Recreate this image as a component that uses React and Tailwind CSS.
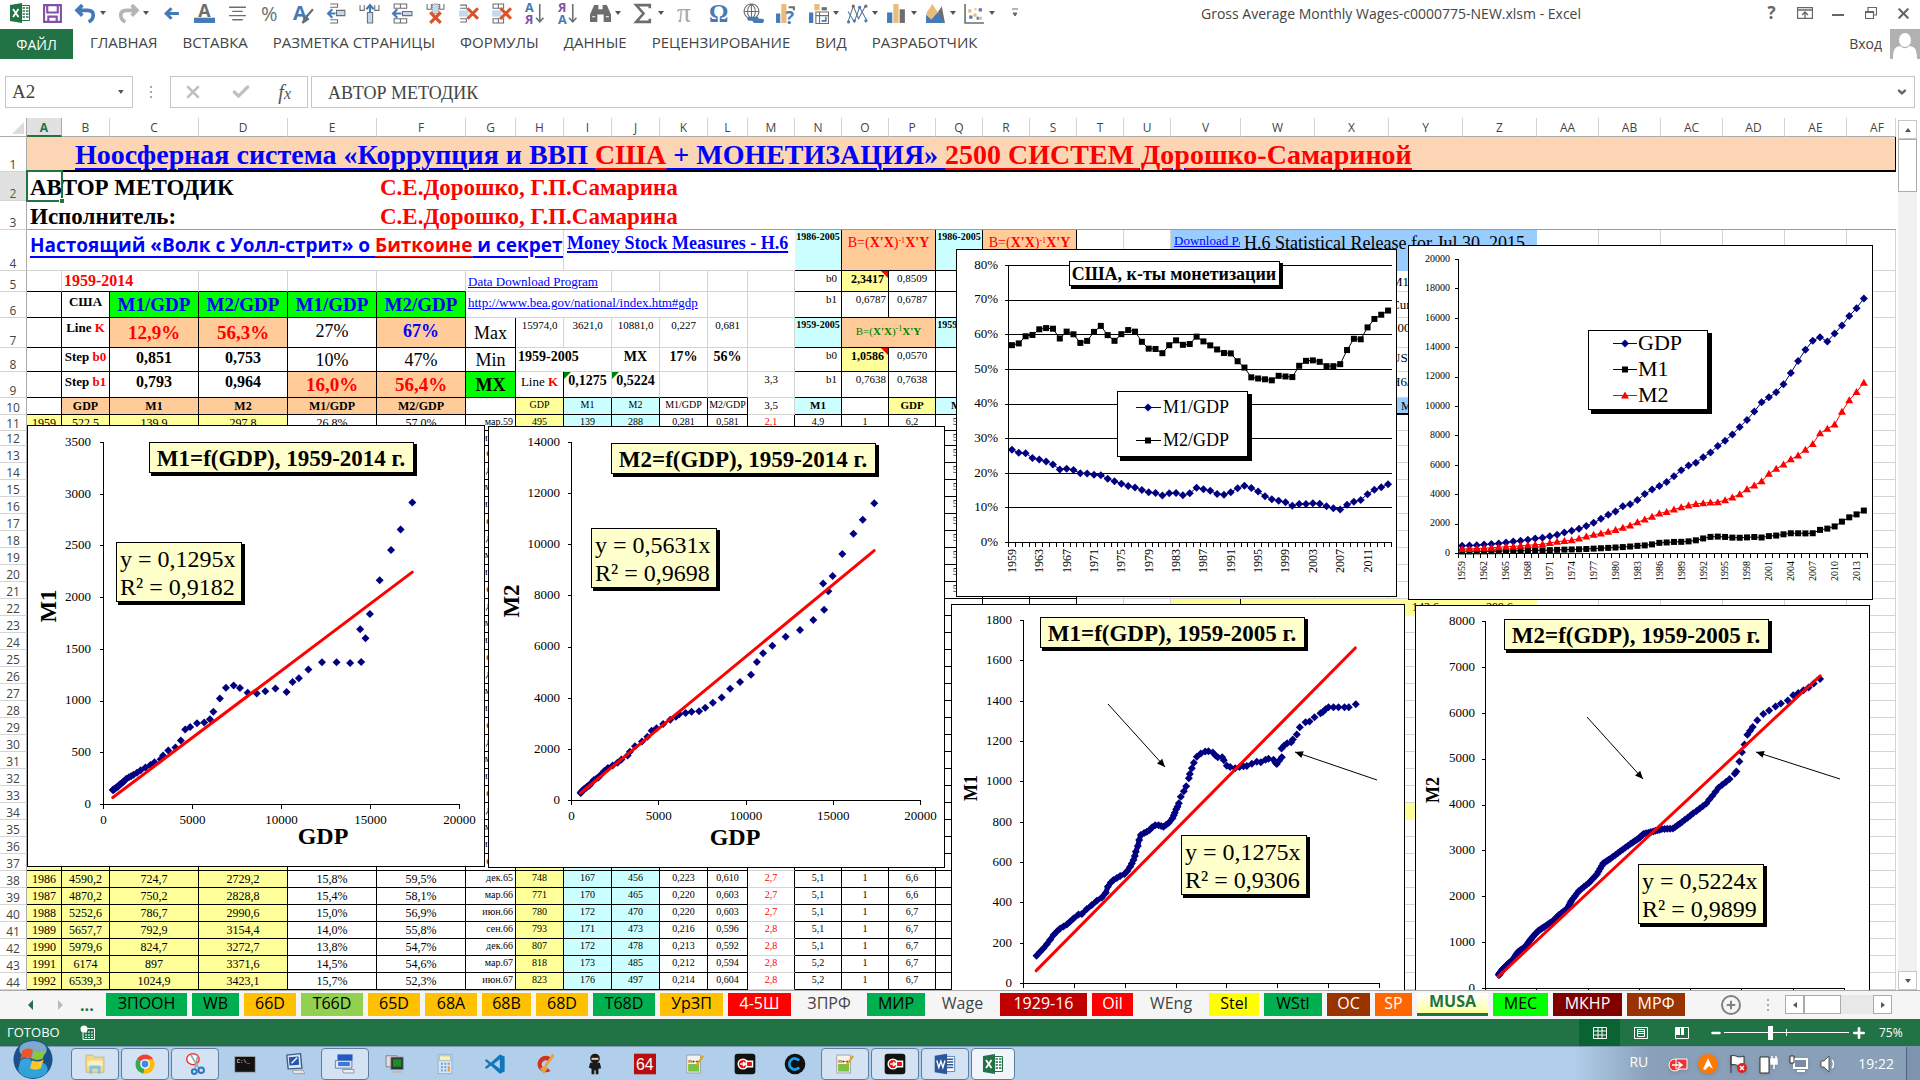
import React from 'react';
import { X, Check, Plus, Minus, ChevronDown } from 'lucide-react';

const GDP = [522.5, 543.3, 563.3, 605.1, 638.6, 685.8, 743.7, 815, 861.7, 942.5, 1019.9, 1075.9, 1167.8, 1282.4, 1428.5, 1548.8, 1688.9, 1877.6, 2086, 2356.6, 2632.1, 2862.5, 3211, 3345, 3638.1, 4040.7, 4346.7, 4590.2, 4870.2, 5252.6, 5657.7, 5979.6, 6174, 6539.3, 6878.7, 7308.8, 7664.1, 8100.2, 8608.5, 9089.2, 9660.6, 10284.8, 10621.8, 10977.5, 11510.7, 12274.9, 13093.7, 13855.9, 14477.6, 14718.6, 14418.7, 14964.4, 15517.9, 16155.3, 16691.5, 17348];
const M1 = [139.9, 140.7, 145.2, 147.8, 153.3, 160.3, 167.8, 172, 183.3, 197.4, 203.9, 214.4, 228.3, 249.2, 262.9, 274.2, 287.1, 306.2, 330.9, 357.3, 381.8, 408.5, 436.7, 474.8, 521.4, 551.6, 619.8, 724.7, 750.2, 786.7, 792.9, 824.7, 897, 1024.9, 1129.6, 1150.7, 1127.5, 1081.3, 1072.3, 1095, 1122.2, 1088.6, 1183.2, 1220.4, 1306.2, 1376, 1374.8, 1367.5, 1377.8, 1606.9, 1694.2, 1840.7, 2168, 2460, 2660, 2920];
const M2 = [297.8, 312.4, 335.5, 362.7, 393.2, 424.7, 459.2, 480.2, 524.8, 566.8, 587.9, 626.5, 710.3, 802.3, 855.5, 902.1, 1016.2, 1152, 1270.3, 1366, 1473.7, 1599.8, 1755.5, 1906, 2123.8, 2306.8, 2492, 2729.2, 2828.8, 2990.6, 3154.4, 3272.7, 3371.6, 3423.1, 3475, 3486, 3630, 3818, 4032, 4375, 4632, 4914, 5421, 5759, 6054, 6405, 6668, 7056, 7457, 8181, 8483, 8782, 9640, 10430, 10980, 11620];

// quarterly M1 curve, in plot units (1068 wide, 1088 high)
const M1Q = [[39, 83], [50, 95], [60, 106], [70, 118], [80, 131], [90, 145], [100, 156], [110, 165], [120, 171], [130, 177], [140, 186], [150, 195], [165, 207], [175, 208], [190, 223], [205, 235], [220, 248], [235, 258], [247, 272], [253, 290], [262, 303], [270, 310], [280, 316], [290, 322], [303, 328], [312, 338], [320, 350], [325, 360], [330, 370], [334, 382], [337, 395], [343, 412], [347, 430], [352, 445], [362, 451], [370, 455], [378, 460], [386, 468], [395, 474], [405, 474], [413, 472], [420, 470], [428, 476], [436, 482], [447, 495], [451, 504], [454, 512], [458, 522], [462, 530], [466, 540], [472, 560], [481, 576], [488, 591], [496, 615], [499, 628], [505, 645], [511, 662], [520, 680], [532, 689], [545, 695], [555, 696], [568, 692], [576, 683], [583, 678], [596, 678], [601, 669], [610, 653], [620, 649], [635, 645], [648, 649], [660, 651], [670, 652], [685, 659], [700, 665], [712, 663], [726, 671], [735, 674], [750, 671], [756, 662], [760, 658], [767, 668], [775, 678], [774, 704], [782, 713], [791, 720], [803, 723], [808, 731], [820, 746], [829, 768], [846, 783], [858, 785], [873, 798], [891, 810], [898, 814], [906, 822], [915, 828], [930, 828], [945, 828], [963, 828], [976, 828], [997, 837]];

// last years of the quarterly M2 curve, [GDP, M2]
const M2_TAIL = [[9720, 4680], [9784, 4732], [9900, 4950], [10000, 5150], [10100, 5320], [10213, 5532], [10320, 5620], [10420, 5700], [10600, 5850], [10833, 5986], [11060, 6060], [11309, 6147], [11520, 6210], [11787, 6280], [12000, 6390], [12200, 6440], [12400, 6500], [12600, 6560], [12800, 6650], [13047, 6745]];

const COLS = [
  ['A', 'w-[35px]'], ['B', 'w-[48px]'], ['C', 'w-[89px]'], ['D', 'w-[89px]'], ['E', 'w-[89px]'], ['F', 'w-[89px]'], ['G', 'w-[50px]'],
  ['H', 'w-[48px]'], ['I', 'w-[48px]'], ['J', 'w-[48px]'], ['K', 'w-[48px]'], ['L', 'w-[40px]'], ['M', 'w-[47px]'], ['N', 'w-[47px]'],
  ['O', 'w-[47px]'], ['P', 'w-[47px]'], ['Q', 'w-[47px]'], ['R', 'w-[47px]'], ['S', 'w-[47px]'], ['T', 'w-[47px]'], ['U', 'w-[47px]'],
  ['V', 'w-[70px]'], ['W', 'w-[74px]'], ['X', 'w-[74px]'], ['Y', 'w-[74px]'], ['Z', 'w-[74px]'], ['AA', 'w-[62px]'], ['AB', 'w-[62px]'],
  ['AC', 'w-[62px]'], ['AD', 'w-[62px]'], ['AE', 'w-[62px]'], ['AF', ''],
];

const ru = (n) => String(n).replace('.', ',');
const pct = (a, b) => ((a / b) * 100).toFixed(1).replace('.', ',') + '%';

const K = 'border-black ';
const YEL = 'bg-[#ffff99] ';
const CYA = 'bg-[#ccffff] ';
const ORA = 'bg-[#ffcc99] ';
const GRN = 'bg-[#00ff00] ';
const BLU = 'bg-[#99ccff] ';
const MID = 'text-center align-middle ';
const TOP = 'text-center align-top ';
const BLANK = 'border-white ';

const Formula = ({ small }) => (
  <span className={small ? 'text-[11px] text-[#008000]' : 'text-[14px] text-[#ff0000]'}>
    B=(<b>X'X</b>)<sup className="text-[8px]">-1</sup><b>X'Y</b>
  </span>
);
const Flag = ({ children, red }) => (
  <div className="relative">
    {children}
    <i className={red
      ? 'absolute right-0 top-0 border-t-[7px] border-l-[7px] border-t-[#ff0000] border-l-transparent'
      : 'absolute left-0 top-0 border-t-[7px] border-r-[7px] border-t-[#008000] border-r-transparent'} />
  </div>
);
const Link = ({ children, className = '' }) => (
  <a href="#sheet" className={'underline text-[#0000ff] ' + className}>{children}</a>
);
const Red = ({ children }) => <span className="text-[#ff0000] underline">{children}</span>;
const Key = ({ children }) => <span className="text-[#ff0000]">{children}</span>;

// column -> [content, classes, colSpan]
const TOP_ROWS = [
  { h: 'h-[35px]', cells: {
    A: [<a href="#title" className="pl-12 text-[28px] font-bold underline decoration-2 underline-offset-4 text-[#0000ff]">
      Ноосферная система «Коррупция и ВВП <Red>США</Red> + МОНЕТИЗАЦИЯ» <Red>2500 СИСТЕМ Дорошко-Самариной</Red>
    </a>, 'border-b-2 border-black bg-[#fcd5b4] pt-[3px] align-middle', 32],
  } },
  { h: 'h-[29px]', cells: {
    A: ['АВТОР МЕТОДИК', BLANK + 'pl-[3px] pt-[3px] align-middle text-[23px] font-bold', 5],
    F: ['С.Е.Дорошко, Г.П.Самарина', BLANK + 'pl-[3px] pt-[3px] align-middle text-[23px] font-bold text-[#ff0000]', 27],
  } },
  { h: 'h-[29px]', cells: {
    A: ['Исполнитель:', 'border-[#9c9c9c] border-r-0 pl-[3px] pt-[3px] align-middle text-[23px] font-bold', 5],
    F: ['С.Е.Дорошко, Г.П.Самарина', 'border-[#9c9c9c] border-r-0 pl-[3px] pt-[3px] align-middle text-[23px] font-bold text-[#ff0000]', 27],
  } },
  { h: 'h-[41px]', cells: {
    A: [<Link className="text-[19px] font-bold font-['Open_Sans',sans-serif] decoration-2 underline-offset-4">Настоящий «Волк с Уолл-стрит» о <Red>Биткоине</Red> и секретах</Link>, 'border-[#d4d4d4] pl-[3px] pt-[6px] align-top', 8],
    I: [<Link className="text-[18px] font-bold decoration-2 underline-offset-2">Money Stock Measures - H.6</Link>, 'border-[#d4d4d4] pl-[3px] pt-1 align-top border-r-0', 5],
    N: ['1986-2005', K + CYA + TOP + 'pt-[2px] text-[10px] font-bold'],
    O: [<Formula />, K + ORA + TOP + 'pt-1', 2],
    Q: ['1986-2005', K + CYA + TOP + 'pt-[2px] text-[10px] font-bold'],
    R: [<Formula />, K + ORA + TOP + 'pt-1', 2],
    V: [<Link className="text-[13px]">Download Page</Link>, BLU + 'border-[#99ccff] pl-[3px] pt-[2px] align-top'],
    W: ['H.6 Statistical Release for Jul 30, 2015', BLU + 'border-[#99ccff] pl-[3px] pt-1 align-top text-[18px]', 4],
  } },
  { h: 'h-[21px]', cells: {
    A: ['', 'border-[#d4d4d4] border-b-black'],
    B: ['1959-2014', 'border-[#d4d4d4] border-b-black pl-[2px] align-middle text-[16px] font-bold text-[#ff0000]', 2],
    D: ['', 'border-[#d4d4d4] border-b-black'],
    E: ['', 'border-[#d4d4d4] border-b-black'],
    F: ['', 'border-[#d4d4d4] border-b-black'],
    G: [<Link className="text-[13px]">Data Download Program</Link>, 'border-[#d4d4d4] pl-[2px] pt-[2px] align-top', 3],
    M: ['', 'border-[#d4d4d4]'],
    N: ['b0', K + 'pr-1 pt-[2px] text-right align-top text-[11px]'],
    O: [<Flag red><span className="block pr-1 pt-[2px] text-right text-[12px] font-bold">2,3417</span></Flag>, K + YEL + 'align-top'],
    P: ['0,8509', K + TOP + 'pt-[2px] text-[11px]'], Q: ['', K], R: ['', K], S: ['', K],
    Y: ['M1; Not seasonally', 'border-[#d4d4d4] pl-[2px] align-middle text-[13px]'],
  } },
  { h: 'h-[26px]', cells: {
    A: ['', K], B: ['США', K + TOP + 'pt-[3px] text-[13px] font-bold'],
    C: ['M1/GDP', K + GRN + MID + 'text-[19px] font-bold text-[#0000ff]'],
    D: ['M2/GDP', K + GRN + MID + 'text-[19px] font-bold text-[#0000ff]'],
    E: ['M1/GDP', K + GRN + MID + 'text-[19px] font-bold text-[#0000ff]'],
    F: ['M2/GDP', K + GRN + MID + 'text-[19px] font-bold text-[#0000ff]'],
    G: [<Link className="text-[13px]">http://www.bea.gov/national/index.htm#gdp</Link>, 'border-[#d4d4d4] pl-[2px] pt-[2px] align-top', 5],
    N: ['b1', K + 'pr-1 pt-[2px] text-right align-top text-[11px]'],
    O: ['0,6787', K + 'pr-[2px] pt-[2px] text-right align-top text-[11px]'],
    P: ['0,6787', K + TOP + 'pt-[2px] text-[11px]'], Q: ['', K], R: ['', K], S: ['', K],
    Y: ['Currency', 'border-[#d4d4d4] pl-[2px] align-middle text-[13px]'],
  } },
  { h: 'h-[30px]', cells: {
    A: ['', K], B: [<>Line <Key>K</Key></>, K + TOP + 'pt-[3px] text-[13px] font-bold'],
    C: ['12,9%', K + ORA + MID + 'text-[19px] font-bold text-[#ff0000]'],
    D: ['56,3%', K + ORA + MID + 'text-[19px] font-bold text-[#ff0000]'],
    E: ['27%', K + TOP + 'pt-1 text-[18px]'],
    F: ['67%', K + ORA + TOP + 'pt-1 text-[18px] font-bold text-[#0000ff]'],
    G: ['Max', K + MID + 'text-[18px]'],
    H: ['15974,0', 'border-[#d4d4d4] text-center align-top pt-[2px] text-[11px]'],
    I: ['3621,0', 'border-[#d4d4d4] text-center align-top pt-[2px] text-[11px]'],
    J: ['10881,0', 'border-[#d4d4d4] text-center align-top pt-[2px] text-[11px]'],
    K: ['0,227', 'border-[#d4d4d4] text-center align-top pt-[2px] text-[11px]'],
    L: ['0,681', 'border-[#d4d4d4] text-center align-top pt-[2px] text-[11px]'],
    N: ['1959-2005', K + CYA + TOP + 'pt-[2px] text-[10px] font-bold'],
    O: [<Formula small />, K + ORA + TOP + 'pt-1', 2],
    Q: ['1959-2005', K + CYA + TOP + 'pt-[2px] text-[10px] font-bold'], R: ['', K], S: ['', K],
    Y: ['1000000', 'border-[#d4d4d4] pl-[2px] align-top pt-[3px] text-[13px]'],
  } },
  { h: 'h-[24px]', cells: {
    A: ['', K], B: [<>Step <Key>b0</Key></>, K + TOP + 'pt-[2px] text-[13px] font-bold'],
    C: ['0,851', K + TOP + 'pt-[2px] text-[16px] font-bold'],
    D: ['0,753', K + TOP + 'pt-[2px] text-[16px] font-bold'],
    E: ['10%', K + MID + 'text-[18px]'], F: ['47%', K + MID + 'text-[18px]'],
    G: ['Min', K + MID + 'text-[18px]'],
    H: ['1959-2005', 'border-[#d4d4d4] pl-[2px] pt-[2px] align-top text-[14px] font-bold', 2],
    J: ['MX', 'border-[#d4d4d4] text-center align-top pt-[2px] text-[14px] font-bold'],
    K: ['17%', 'border-[#d4d4d4] text-center align-top pt-[2px] text-[14px] font-bold'],
    L: ['56%', 'border-[#d4d4d4] text-center align-top pt-[2px] text-[14px] font-bold'],
    N: ['b0', K + 'pr-1 pt-[2px] text-right align-top text-[11px]'],
    O: [<Flag red><span className="block pr-1 pt-[2px] text-right text-[12px] font-bold">1,0586</span></Flag>, K + YEL + 'align-top'],
    P: ['0,0570', K + TOP + 'pt-[2px] text-[11px]'], Q: ['', K], R: ['', K], S: ['', K],
    Y: ['USD', 'border-[#d4d4d4] pl-[2px] align-top pt-[3px] text-[13px]'],
  } },
  { h: 'h-[26px]', cells: {
    A: ['', K], B: [<>Step <Key>b1</Key></>, K + TOP + 'pt-[3px] text-[13px] font-bold'],
    C: ['0,793', K + TOP + 'pt-[2px] text-[16px] font-bold'],
    D: ['0,964', K + TOP + 'pt-[2px] text-[16px] font-bold'],
    E: ['16,0%', K + ORA + MID + 'text-[19px] font-bold text-[#ff0000]'],
    F: ['56,4%', K + ORA + MID + 'text-[19px] font-bold text-[#ff0000]'],
    G: ['MX', K + GRN + MID + 'text-[18px] font-bold'],
    H: [<>Line <Key><b>K</b></Key></>, K + TOP + 'pt-[3px] text-[13px]'],
    I: [<Flag><span className="block pt-[2px] text-center text-[14px] font-bold">0,1275</span></Flag>, K + 'border-r-[#d4d4d4] align-top'],
    J: [<Flag><span className="block pt-[2px] text-center text-[14px] font-bold">0,5224</span></Flag>, K + 'border-r-[#d4d4d4] align-top'],
    K: ['', 'border-[#d4d4d4] border-b-black'], L: ['', 'border-[#d4d4d4] border-b-black'],
    M: ['3,3', 'border-[#d4d4d4] text-center align-top pt-[2px] text-[11px]'],
    N: ['b1', K + 'pr-1 pt-[2px] text-right align-top text-[11px]'],
    O: ['0,7638', K + 'pr-[2px] pt-[2px] text-right align-top text-[11px]'],
    P: ['0,7638', K + TOP + 'pt-[2px] text-[11px]'], Q: ['', K], R: ['', K], S: ['', K],
    Y: ['H6/H6_M1', 'border-[#d4d4d4] pl-[2px] align-top pt-[3px] text-[13px]'],
  } },
  { h: 'h-[17px]', cells: {
    A: ['', K], B: ['GDP', K + ORA + MID + 'text-[12px] font-bold'],
    C: ['M1', K + ORA + MID + 'text-[12px] font-bold'], D: ['M2', K + ORA + MID + 'text-[12px] font-bold'],
    E: ['M1/GDP', K + ORA + MID + 'text-[12px] font-bold'], F: ['M2/GDP', K + ORA + MID + 'text-[12px] font-bold'],
    G: ['', K], H: ['GDP', K + YEL + TOP + 'pt-[2px] text-[10px]'],
    I: ['M1', K + CYA + TOP + 'pt-[2px] text-[10px]'], J: ['M2', K + CYA + TOP + 'pt-[2px] text-[10px]'],
    K: ['M1/GDP', K + TOP + 'pt-[2px] text-[10px]'], L: ['M2/GDP', K + TOP + 'pt-[2px] text-[10px]'],
    M: ['3,5', 'border-[#d4d4d4] text-center align-top pt-[2px] text-[11px]'],
    N: ['M1', K + CYA + TOP + 'pt-[2px] text-[11px] font-bold'], O: ['', K],
    P: ['GDP', K + YEL + TOP + 'pt-[2px] text-[11px] font-bold'],
    Q: ['M2', K + CYA + TOP + 'pt-[2px] text-[11px] font-bold'], R: ['', K], S: ['', K],
    W: ['', BLU + 'border-b-2 border-black border-r-0'], X: ['', BLU + 'border-b-2 border-black border-r-0'],
    Y: ['M1', BLU + 'border-b-2 border-black border-r-0 pl-3 text-[12px]'], Z: ['', BLU + 'border-b-2 border-black border-r-0'],
  } },
];

const QUARTERS = {
  11: ['495', '139', '288', '0,281', '0,581', '2,1', '4,9', '1', '6,2'],
  38: ['748', '167', '456', '0,223', '0,610', '2,7', '5,1', '1', '6,6'],
  39: ['771', '170', '465', '0,220', '0,603', '2,7', '5,1', '1', '6,6'],
  40: ['780', '172', '470', '0,220', '0,603', '2,7', '5,1', '1', '6,7'],
  41: ['793', '171', '473', '0,216', '0,596', '2,8', '5,1', '1', '6,7'],
  42: ['807', '172', '478', '0,213', '0,592', '2,8', '5,1', '1', '6,7'],
  43: ['818', '173', '485', '0,212', '0,594', '2,8', '5,2', '1', '6,7'],
  44: ['823', '176', '497', '0,214', '0,604', '2,8', '5,2', '1', '6,7'],
};
const MONTHS = ['мар', 'июн', 'сен', 'дек'];

function dataRow(n) {
  const i = n - 11;
  const q = QUARTERS[n] || ['', '', '', '', '', '', '', '', ''];
  const big = MID + 'text-[12px]';
  const small = TOP + 'pt-[2px] text-[10px]';
  const year = QUARTERS[n]
    ? [1959 + i, ru(GDP[i]), ru(M1[i]), ru(M2[i]), pct(M1[i], GDP[i]), pct(M2[i], GDP[i])]
    : ['', '', '', '', '', ''];
  const cells = {
    A: [year[0], K + YEL + big], B: [year[1], K + YEL + big], C: [year[2], K + YEL + big], D: [year[3], K + YEL + big],
    E: [year[4], K + big], F: [year[5], K + big],
    G: [`${MONTHS[i % 4]}.${59 + Math.floor(i / 4)}`, K + 'pr-[2px] pt-[2px] text-right align-top text-[10px]'],
    H: [q[0], K + YEL + small], I: [q[1], K + CYA + small], J: [q[2], K + CYA + small],
    K: [q[3], K + small], L: [q[4], K + small],
    M: [q[5], 'border-[#d4d4d4] border-r-black text-[#ff0000] ' + small],
    N: [q[6], K + small], O: [q[7], K + small], P: [q[8], K + small],
    Q: [n < 22 ? '5,6' : '', K + small], R: ['', K], S: ['', K],
  };
  if (n === 22 || n === 34) {
    cells.V = ['', YEL + 'border-[#ffff99] border-r-black'];
    cells.W = ['', YEL + 'border-[#ffff99]'];
    cells.X = ['', YEL + 'border-[#ffff99]'];
    cells.Y = [n === 22 ? '142,6' : '', YEL + 'border-[#ffff99] text-center align-top pt-[2px] text-[12px]'];
    cells.Z = [n === 22 ? '299,6' : '', YEL + 'border-[#ffff99] text-center align-top pt-[2px] text-[12px]'];
  }
  return { h: n === 11 ? 'h-[16px]' : n === 12 ? 'h-[15px]' : 'h-[17px]', cells };
}

const ROWS = [...TOP_ROWS];
for (let n = 11; n <= 44; n++) ROWS.push(dataRow(n));

function Row({ n, row }) {
  const out = [];
  for (let i = 0; i < COLS.length; i++) {
    const cell = row.cells[COLS[i][0]];
    out.push(
      <td key={i} colSpan={cell?.[2] || 1} className={'overflow-hidden border-r border-b p-0 ' + (cell ? cell[1] : 'border-[#d4d4d4]')}>
        {cell?.[0]}
      </td>
    );
    if (cell?.[2]) i += cell[2] - 1;
  }
  return (
    <tr className={row.h}>
      <th className={(n === 2 ? 'bg-[#e1e1e1] text-[#217346]' : 'text-[#444]') + " overflow-hidden border-r border-b border-[#d4d4d4] border-r-[#ababab] p-0 align-bottom text-[12px] font-normal font-['Open_Sans',sans-serif]"}>
        {n}
      </th>
      {out}
    </tr>
  );
}

function Grid() {
  return (
    <table className="w-full table-fixed border-separate border-spacing-0 whitespace-nowrap leading-none text-black">
      <colgroup>
        <col className="w-[27px]" />
        {COLS.map(([name, w]) => <col key={name} className={w} />)}
      </colgroup>
      <thead>
        <tr className="h-[19px] font-['Open_Sans',sans-serif] text-[12px] text-[#444]">
          <th className="border-b border-r border-[#ababab] p-0">
            <svg className="ml-3 h-[13px] w-[12px]" viewBox="0 0 12 13"><path d="M12 1v12H0z" fill="#dcdcdc" /></svg>
          </th>
          {COLS.map(([name]) => (
            <th key={name} className={name === 'A'
              ? 'border-b-2 border-r border-[#217346] border-r-[#ababab] bg-[#e1e1e1] p-0 pt-[2px] font-bold text-[#217346]'
              : 'border-b border-r border-[#ababab] border-r-[#d4d4d4] p-0 pt-[2px] font-normal last:pl-3'}>
              {name}
            </th>
          ))}
        </tr>
      </thead>
      <tbody>
        {ROWS.map((row, i) => <Row key={i} n={i + 1} row={row} />)}
      </tbody>
    </table>
  );
}

/* ---------- charts ---------- */

const mapper = (p) => [
  (v) => p.x0 + (v / p.xMax) * (p.x1 - p.x0),
  (v) => p.y0 - (v / p.yMax) * (p.y0 - p.y1),
];
const range = (max, step) => Array.from({ length: Math.floor(max / step) + 1 }, (_, i) => i * step);

const Mark = ({ kind, x, y, s = 4 }) => {
  if (kind === 'square') return <rect x={x - s + 1} y={y - s + 1} width={2 * s - 2} height={2 * s - 2} fill="#000" />;
  if (kind === 'triangle') return <path d={`M${x} ${y - s}L${x + s} ${y + s - 1}H${x - s}z`} fill="#f00" />;
  return <path d={`M${x} ${y - s}L${x + s} ${y}L${x} ${y + s}L${x - s} ${y}z`} fill="#000080" />;
};

function Box({ x, y, w, h, fill = '#ffffcc', d = 2 }) {
  return (
    <g shapeRendering="crispEdges">
      <rect x={x + d} y={y + d} width={w + 1} height={h + 1} fill="#000" />
      <rect x={x + 0.5} y={y + 0.5} width={w - 1} height={h - 1} fill={fill} stroke="#000" />
    </g>
  );
}

function Axes({ p, xStep, yStep, suffix = '', size = 13, labelX, labelY, xLabels = true, gridLines }) {
  const [sx, sy] = mapper(p);
  return (
    <g fontSize={size}>
      <g stroke="#000" shapeRendering="crispEdges">
        {gridLines && range(p.yMax, yStep).map((v) => <path key={v} d={`M${p.x0} ${sy(v)}H${p.x1}`} />)}
        <path d={`M${p.x0} ${p.y1}V${p.y0}H${p.x1}`} fill="none" />
        {range(p.yMax, yStep).map((v) => <path key={v} d={`M${p.x0 - 4} ${sy(v)}h4`} />)}
        {range(p.xMax, xStep).map((v) => <path key={v} d={`M${sx(v)} ${p.y0}v4`} />)}
      </g>
      {range(p.yMax, yStep).map((v) => <text key={v} x={labelX} y={sy(v) + size / 3 - 1} textAnchor="end">{v}{suffix}</text>)}
      {xLabels && range(p.xMax, xStep).map((v) => <text key={v} x={sx(v)} y={labelY} textAnchor="middle">{v}</text>)}
    </g>
  );
}

const Heading = ({ x, y, children }) => (
  <g>
    <Box x={x} y={y} w={265} h={31} />
    <text x={x + 132} y={y + 24} fontSize="23" fontWeight="bold" textAnchor="middle">{children}</text>
  </g>
);
const Equation = ({ x, y, a, b }) => (
  <g>
    <Box x={x} y={y} w={126} h={60} />
    <text x={x + 4} y={y + 25} fontSize="24">{a}</text>
    <text x={x + 4} y={y + 53} fontSize="24">{b}</text>
  </g>
);
const Upright = ({ x, y, size = 23, anchor = 'middle', bold = true, children }) => (
  <text transform={`translate(${x} ${y}) rotate(-90)`} fontSize={size} fontWeight={bold ? 'bold' : 'normal'} textAnchor={anchor}>{children}</text>
);
const Arrow = ({ x1, y1, x2, y2 }) => {
  const a = (Math.atan2(y2 - y1, x2 - x1) * 180) / Math.PI;
  return (
    <g>
      <path d={`M${x1} ${y1}L${x2} ${y2}`} stroke="#000" />
      <path transform={`translate(${x2} ${y2}) rotate(${a})`} d="M0 0L-8 -3.5V3.5z" />
    </g>
  );
};

function Scatter({ p, points, slope, from, to, dense }) {
  const [sx, sy] = mapper(p);
  return (
    <g>
      {dense && <path d={'M' + points.slice(0, dense).map(([a, b]) => `${sx(a)} ${sy(b)}`).join('L')} fill="none" stroke="#000080" strokeWidth="5" />}
      {points.map(([a, b], i) => <Mark key={i} x={sx(a)} y={sy(b)} />)}
      <path d={`M${sx(from)} ${sy(from * slope)}L${sx(to)} ${sy(to * slope)}`} stroke="#f00" strokeWidth="3" strokeLinecap="round" />
    </g>
  );
}

function Series({ p, values, kind, color }) {
  const step = (p.x1 - p.x0) / values.length;
  const pts = values.map((v, i) => [p.x0 + step * (i + 0.5), p.y0 - (v / p.yMax) * (p.y0 - p.y1)]);
  return (
    <g>
      <path d={'M' + pts.map((q) => q.join(' ')).join('L')} fill="none" stroke={color} />
      {pts.map(([x, y], i) => <Mark key={i} kind={kind} x={x} y={y} />)}
    </g>
  );
}

function YearLabels({ p, every, size, y }) {
  const step = (p.x1 - p.x0) / GDP.length;
  return GDP.map((_, i) => (i % every === 0
    ? <Upright key={i} x={p.x0 + step * (i + 0.5) + size / 3} y={y} size={size} anchor="end" bold={false}>{1959 + i}</Upright>
    : null));
}

const svgFont = " absolute bg-white outline outline-1 -outline-offset-1 outline-black font-['Liberation_Serif',serif]";

function ChartM1() {
  const p = { x0: 103.5, x1: 459.5, y0: 804.5, y1: 442.5, xMax: 20000, yMax: 3500 };
  return (
    <svg viewBox="27 425 458 442" className={'left-[27px] top-[307px] h-[442px] w-[458px]' + svgFont}>
      <Axes p={p} xStep={5000} yStep={500} labelX={91} labelY={824} />
      <Scatter p={p} points={GDP.map((g, i) => [g, M1[i]])} slope={0.1295} from={522} to={17348} />
      <Heading x={149} y={442}>M1=f(GDP), 1959-2014 г.</Heading>
      <Equation x={116} y={542} a="y = 0,1295x" b="R² = 0,9182" />
      <Upright x={56} y={606}>M1</Upright>
      <text x={323} y={844} fontSize="24" fontWeight="bold" textAnchor="middle">GDP</text>
    </svg>
  );
}

function ChartM2() {
  const p = { x0: 571.5, x1: 920.5, y0: 800.5, y1: 442.5, xMax: 20000, yMax: 14000 };
  return (
    <svg viewBox="488 426 457 442" className={'left-[488px] top-[308px] h-[442px] w-[457px]' + svgFont}>
      <Axes p={p} xStep={5000} yStep={2000} labelX={560} labelY={820} />
      <Scatter p={p} points={GDP.map((g, i) => [g, M2[i]])} slope={0.5631} from={522} to={17348} />
      <Heading x={611} y={443}>M2=f(GDP), 1959-2014 г.</Heading>
      <Equation x={591} y={528} a="y = 0,5631x" b="R² = 0,9698" />
      <Upright x={519} y={601}>M2</Upright>
      <text x={735} y={845} fontSize="24" fontWeight="bold" textAnchor="middle">GDP</text>
    </svg>
  );
}

function ChartRatio() {
  const p = { x0: 1008.5, x1: 1391.5, y0: 542.5, y1: 265.5, xMax: 56, yMax: 80 };
  return (
    <svg viewBox="956 249 441 348" className={'left-[956px] top-[131px] h-[348px] w-[441px]' + svgFont}>
      <Axes p={p} xStep={1} yStep={10} suffix="%" labelX={998} xLabels={false} gridLines />
      <Series p={p} values={GDP.map((g, i) => (M1[i] / g) * 100)} color="#000080" />
      <Series p={p} values={GDP.map((g, i) => (M2[i] / g) * 100)} kind="square" color="#000" />
      <YearLabels p={p} every={4} size={12} y={549} />
      <Box x={1069} y={261} w={211} h={25} fill="#fff" />
      <text x={1174} y={280} fontSize="18" fontWeight="bold" textAnchor="middle">США, к-ты монетизации</text>
      <Box x={1117} y={391} w={131} h={66} fill="#fff" d={3} />
      <path d="M1136 407.5h25" stroke="#000080" />
      <Mark x={1148} y={407.5} />
      <path d="M1136 440.5h25" stroke="#000" />
      <Mark kind="square" x={1148} y={440.5} />
      <text x={1163} y={413} fontSize="18">M1/GDP</text>
      <text x={1163} y={446} fontSize="18">M2/GDP</text>
    </svg>
  );
}

function ChartLevels() {
  const p = { x0: 1458.5, x1: 1867.5, y0: 553.5, y1: 259.5, xMax: 56, yMax: 20000 };
  return (
    <svg viewBox="1408 245 465 355" className={'left-[1408px] top-[127px] h-[355px] w-[465px]' + svgFont}>
      <Axes p={p} xStep={1} yStep={2000} size={10} labelX={1450} xLabels={false} />
      <Series p={p} values={GDP} color="#000080" />
      <Series p={p} values={M1} kind="square" color="#000" />
      <Series p={p} values={M2} kind="triangle" color="#f00" />
      <YearLabels p={p} every={3} size={10} y={561} />
      <Box x={1588} y={330} w={120} h={80} fill="#fff" d={3} />
      <path d="M1613 343.5h24" stroke="#000080" />
      <Mark x={1625} y={343.5} />
      <path d="M1613 369.5h24" stroke="#000" />
      <Mark kind="square" x={1625} y={369.5} />
      <path d="M1613 395.5h24" stroke="#f00" />
      <Mark kind="triangle" x={1625} y={395.5} />
      <text x={1638} y={350} fontSize="22">GDP</text>
      <text x={1638} y={376} fontSize="22">M1</text>
      <text x={1638} y={402} fontSize="22">M2</text>
    </svg>
  );
}

function ChartM1Quarterly() {
  const p = { x0: 1023.5, x1: 1379.5, y0: 983.5, y1: 620.5, xMax: 14000, yMax: 1800 };
  const points = M1Q.map(([a, b]) => [(a / 1068) * 14000, (b / 1088) * 1800]);
  return (
    <svg viewBox="951 604 454 440" className={'left-[951px] top-[486px] h-[440px] w-[454px]' + svgFont}>
      <Axes p={p} xStep={2000} yStep={200} labelX={1012} xLabels={false} />
      <Scatter p={p} points={points} slope={0.1275} from={500} to={13050} dense={50} />
      <Heading x={1040} y={617}>M1=f(GDP), 1959-2005 г.</Heading>
      <Equation x={1181} y={835} a="y = 0,1275x" b="R² = 0,9306" />
      <Upright x={977} y={788} size={18}>M1</Upright>
      <Arrow x1={1108} y1={704} x2={1165} y2={767} />
      <Arrow x1={1377} y1={780} x2={1295} y2={752} />
    </svg>
  );
}

function ChartM2Quarterly() {
  const p = { x0: 1485.5, x1: 1844.5, y0: 988.5, y1: 621.5, xMax: 14000, yMax: 8000 };
  const points = [];
  for (let i = 0; i < 40; i++) {
    for (let q = 0; q < 4; q++) {
      const t = q / 4;
      points.push([GDP[i] + (GDP[i + 1] - GDP[i]) * t, M2[i] + (M2[i + 1] - M2[i]) * t]);
    }
  }
  points.push(...M2_TAIL);
  return (
    <svg viewBox="1415 605 455 440" className={'left-[1415px] top-[487px] h-[440px] w-[455px]' + svgFont}>
      <Axes p={p} xStep={2000} yStep={1000} labelX={1475} xLabels={false} />
      <Scatter p={p} points={points} slope={0.5224} from={500} to={13050} />
      <Heading x={1504} y={619}>M2=f(GDP), 1959-2005 г.</Heading>
      <Equation x={1638} y={864} a="y = 0,5224x" b="R² = 0,9899" />
      <Upright x={1439} y={790} size={18}>M2</Upright>
      <Arrow x1={1587} y1={717} x2={1643} y2={779} />
      <Arrow x1={1840} y1={779} x2={1756} y2={752} />
    </svg>
  );
}

/* ---------- window chrome ---------- */

const B = '#447ab5';
const G = '#6d6d6d';
const R = '#d9542b';
const T = '#e8bd7a';

const ExcelLogo = ({ className }) => (
  <svg viewBox="0 0 20 20" className={className}>
    <path d="M11 2.5h8.5v15H11z" fill="#fff" stroke="#217346" />
    <path d="M12.500 5h2.500M16 5h2.500M12.500 8h2.500M16 8h2.500M12.500 11h2.500M16 11h2.500M12.500 14h2.500M16 14h2.500" stroke="#217346" strokeWidth="1.600" />
    <path d="M0 2L12 0v20L0 18z" fill="#217346" />
    <path d="M3 6l5.500 8M8.500 6L3 14" stroke="#fff" strokeWidth="1.800" />
  </svg>
);

const letter = (ch, color, x, y, size) => (
  <text x={x} y={y} fontSize={size} fontWeight="bold" fill={color} fontFamily="Open Sans, sans-serif">{ch}</text>
);

// [name, margin class, drawing, has drop-down]
const TOOLS = [
  ['Сохранить', 'ml-3', <path d="M2 2h16v16H2zM5 2v7h10V2M6 18v-5h8v5" fill="none" stroke="#8151a8" strokeWidth="2" />],
  ['Отменить', 'ml-3', <path d="M7 2L2 7l5 5M2.500 7H12c7 0 7 8 1 11" fill="none" stroke={B} strokeWidth="3.500" />, true],
  ['Вернуть', 'ml-3', <path d="M13 2l5 5-5 5M17.500 7H8c-7 0-7 8-1 11" fill="none" stroke="#b4b4b4" strokeWidth="3.500" />, true],
  ['Назад', 'ml-3', <path d="M10 5l-5 5 5 5M5 10h12" fill="none" stroke={B} strokeWidth="3" />],
  ['Цвет текста', 'ml-3', <>{letter('A', G, 4, 13, 17)}<path d="M0 14h20v5H0z" fill={B} /></>],
  ['Выравнивание', 'ml-3', <path d="M2 4h16M5 8h10M2 12h16M5 16h10" stroke={G} strokeWidth="1.300" />],
  ['Процент', 'ml-3', <text x="1" y="17" fontSize="19" fill={G}>%</text>],
  ['Формат по образцу', 'ml-3', <>{letter('A', B, 0, 16, 19)}<path d="M19 6l-7 8M13 12l-4 7 6-4" fill={B} stroke={G} strokeWidth="2" /></>],
  ['Вставить ячейки', 'ml-3', <><path d="M4 1h7v3H4M4 16h7v3H4" fill="none" stroke={G} /><path d="M10 7h8v5h-8z" fill="#c5d8ec" stroke={G} /><path d="M6 6L2 10l4 4M2 10h7" stroke={B} strokeWidth="2" fill="none" /></>],
  ['Вставить столбцы', 'ml-3', <><path d="M1 2v5h4V2M15 2v5h4V2" fill="none" stroke={G} /><path d="M8 9h5v10H8z" fill="#c5d8ec" stroke={G} /><path d="M7 6l3.500-4L14 6M10.500 2v7" stroke={B} strokeWidth="2" fill="none" /></>],
  ['Вставить строки', 'ml-3', <><path d="M2 1h12v4H2zM8 1v4M2 15h12v4H2zM8 15v4" fill="none" stroke={G} /><path d="M10 8h9v4h-9z" fill="#c5d8ec" stroke={G} /><path d="M5 6l-4 4 4 4M2 10h7" stroke={B} strokeWidth="2" fill="none" /></>],
  ['Удалить столбцы', 'ml-3', <><path d="M2 1v5h4V1M14 1v5h4V1" fill="none" stroke={G} /><path d="M7 1h6v9H7z" fill="#c5d8ec" stroke={G} strokeDasharray="1" /><path d="M5 9l10 10M15 9L5 19" stroke={R} strokeWidth="3" /></>],
  ['Удалить ячейки', 'ml-3', <><path d="M2 2h6v3H2M2 15h6v3H2" fill="none" stroke={G} /><path d="M1 7h9v6H1z" fill="#c5d8ec" /><path d="M9 5l10 10M19 5L9 15" stroke={R} strokeWidth="3" /></>],
  ['Удалить строки', 'ml-3', <><path d="M2 1h10v4H2zM7 1v4M2 15h10v4H2zM7 15v4" fill="none" stroke={G} /><path d="M1 7h9v6H1z" fill="#c5d8ec" /><path d="M9 5l10 10M19 5L9 15" stroke={R} strokeWidth="3" /></>],
  ['Сортировка от А до Я', 'ml-3', <>{letter('А', B, 1, 9, 12)}{letter('Я', '#8151a8', 1, 20, 12)}<path d="M15 1v17M11.500 14l3.500 4 3.500-4" stroke={G} strokeWidth="1.500" fill="none" /></>],
  ['Сортировка от Я до А', 'ml-3', <>{letter('Я', '#8151a8', 1, 9, 12)}{letter('А', B, 1, 20, 12)}<path d="M15 1v17M11.500 14l3.500 4 3.500-4" stroke={G} strokeWidth="1.500" fill="none" /></>],
  ['Найти', 'ml-3', <><path d="M4 2h4v4h4V2h4l4 9v7h-7v-7H7v7H0v-7z" fill={G} /><path d="M2 13h3M15 13h3" stroke="#fff" /></>, true],
  ['Сумма', 'ml-3', <path d="M16 5V2H3l7 8-7 8h13v-3" fill="none" stroke={G} strokeWidth="2.500" />, true],
  ['Формула', 'ml-3', <text x="1" y="18" fontSize="26" fill="#a8a8a8" fontFamily="Liberation Serif">π</text>],
  ['Символ', 'ml-3', <text x="0" y="18" fontSize="23" fontWeight="bold" fill={B} fontFamily="Liberation Serif">Ω</text>],
  ['Гиперссылка', 'ml-3', <><path d="M9 1a7 7 0 1 0 .1 0M2 8h14M9 1v14M9 1c-5 4-5 10 0 14M9 1c5 4 5 10 0 14" fill="none" stroke={G} /><path d="M7 15h7M12 17h7" stroke={B} strokeWidth="4" strokeLinecap="round" /></>],
  ['Рекомендуемые диаграммы', 'ml-3', <><path d="M1 10h4v9H1z" fill={B} /><path d="M6 1h5v18H6z" fill={T} /><path d="M13 4h5v3" fill="none" stroke={G} strokeWidth="2" />{letter('?', B, 10, 20, 17)}</>],
  ['Сводная диаграмма', 'ml-3', <><path d="M1 9h4v10H1z" fill={B} /><path d="M6 1h5v6H6z" fill={T} /><path d="M13 4h5v3h-5z" fill={G} /><path d="M7.500 8.500h12v11h-12zM7.500 12h12M11 8.500v11" fill="#fff" stroke={G} /><path d="M13 17h4v-4" fill="none" stroke={B} strokeWidth="1.500" /></>, true],
  ['График', 'ml-2', <><path d="M1 18L6 3l5 12 7-13" fill="none" stroke={G} /><path d="M1 8l6 10 5-14 7 13" fill="none" stroke={B} /><g fill={B}><circle cx="1.500" cy="18" r="1.500" /><circle cx="7" cy="17" r="1.500" /><circle cx="12" cy="4" r="1.500" /><circle cx="18" cy="17" r="1.500" /></g><g fill={G}><circle cx="6" cy="3" r="1.500" /><circle cx="18" cy="3" r="1.500" /></g></>, true],
  ['Гистограмма', 'ml-2', <><path d="M1 9h5v10H1z" fill={B} /><path d="M7 1h5v18H7z" fill={T} /><path d="M13 6h5v13h-5z" fill={G} /></>, true],
  ['С областями', 'ml-2', <><path d="M12 19V9l4-6 3 16z" fill={G} /><path d="M1 10l6-9 6 9-6 9z" fill={T} /><path d="M1 19v-8l5 5 6-7 6 8v2z" fill={B} /></>, true],
  ['Точечная', 'ml-2', <><path d="M1 1v18h18" fill="none" stroke={G} strokeWidth="1.500" /><path d="M4 6h3v3H4zM9 10h3v3H9zM14 13h3v3h-3zM10 5h2v2h-2z" fill={T} /><path d="M5 12h3v3H5zM12 13h2v3h-2zM14 5h3v3h-3z" fill={B} /></>, true],
];

const Caret = ({ className = '' }) => <svg viewBox="0 0 6 4" className={'h-1 w-1.5 ' + className}><path d="M0 0h6L3 4z" fill="#555" /></svg>;

function TitleBar() {
  return (
    <header className="flex h-[29px] items-center pb-[3px] pl-[10px]">
      <ExcelLogo className="h-5 w-5" />
      {TOOLS.map(([name, gap, art, drop]) => (
        <button key={name} aria-label={name} className={'flex shrink-0 items-center gap-1 ' + gap}>
          <svg viewBox="0 0 20 20" className="h-[21px] w-[21px] overflow-visible">{art}</svg>
          {drop && <Caret />}
        </button>
      ))}
      <button aria-label="Настройка панели" className="ml-4 w-2"><svg viewBox="0 0 8 10" className="h-[10px] w-2"><path d="M1 1h6M2 5h4L4 8z" stroke="#666" fill="#666" /></svg></button>
      <h1 className="flex-1 pl-2 text-center text-[14px] text-[#444]">Gross Average Monthly Wages-c0000775-NEW.xlsm - Excel</h1>
      <div className="flex items-center text-[#666]">
        <button className="w-[33px] text-[17px] font-bold">?</button>
        <button aria-label="Параметры ленты" className="flex w-[33px] justify-center"><svg viewBox="0 0 16 12" className="h-3 w-4"><path d="M.5.500h15v11H.500zM.500 3h15M8 11V5M5 8l3-3 3 3" fill="none" stroke="#666" strokeWidth="1.300" /></svg></button>
        <button aria-label="Свернуть" className="flex w-[33px] justify-center pt-1"><i className="h-[2px] w-3 bg-[#666]" /></button>
        <button aria-label="Восстановить" className="flex w-[33px] justify-center"><svg viewBox="0 0 12 12" className="h-3 w-3"><path d="M.5 4.500h8v7h-8zM3 4V.500h8.500V8H9M1 5.500h7" fill="none" stroke="#666" strokeWidth="1.200" /></svg></button>
        <button aria-label="Закрыть" className="flex w-[33px] justify-center"><X className="h-[17px] w-[17px]" strokeWidth={3} /></button>
      </div>
    </header>
  );
}

const MENU = ['ГЛАВНАЯ', 'ВСТАВКА', 'РАЗМЕТКА СТРАНИЦЫ', 'ФОРМУЛЫ', 'ДАННЫЕ', 'РЕЦЕНЗИРОВАНИЕ', 'ВИД', 'РАЗРАБОТЧИК'];

function Ribbon() {
  return (
    <nav className="flex h-[30px] items-center text-[14px] text-[#444]">
      <button className="h-full w-[73px] bg-[#217346] text-white">ФАЙЛ</button>
      <div className="flex gap-[25px] pb-[3px] pl-[17px] text-[15px]">
        {MENU.map((m) => <button key={m}>{m}</button>)}
      </div>
      <button className="ml-auto mr-2 pb-[2px]">Вход</button>
      <svg viewBox="0 0 30 30" className="h-[30px] w-[30px] bg-[#b1b1b1]">
        <ellipse cx="15" cy="11" rx="6" ry="7" fill="#fff" />
        <path d="M3 30c0-14 5-12 8-13 2 3 6 3 8 0 3 1 8-1 8 13z" fill="#fff" />
      </svg>
    </nav>
  );
}

function FormulaBar() {
  return (
    <div className="flex h-[59px] items-start pl-[5px] pr-[5px] pt-[17px] text-[#444]">
      <div className="flex h-8 w-[128px] items-center border border-[#c6c6c6] pr-2">
        <input aria-label="Имя" defaultValue="A2" className="w-full pl-[6px] text-[19px] font-['Liberation_Serif',serif] outline-none" />
        <Caret />
      </div>
      <svg viewBox="0 0 3 12" className="mx-4 mt-[10px] h-3 w-[5px]"><path d="M0 0h2v2H0zM0 5h2v2H0zM0 10h2v2H0z" fill="#aaa" /></svg>
      <div className="flex h-8 w-[138px] items-center justify-between border border-[#c6c6c6] pl-3 pr-4">
        <X className="h-5 w-5 text-[#c0c0c0]" strokeWidth={3} />
        <Check className="h-5 w-5 text-[#c0c0c0]" strokeWidth={4} />
        <span className="font-['Liberation_Serif',serif] text-[20px] italic text-[#555]">f<span className="text-[16px]">x</span></span>
      </div>
      <div className="ml-[3px] flex h-8 flex-1 items-center border border-[#c6c6c6] pr-[6px]">
        <input aria-label="Строка формул" defaultValue="АВТОР МЕТОДИК" className="w-full pl-4 pt-[2px] text-[18px] font-['Liberation_Serif',serif] outline-none" />
        <ChevronDown className="h-3 w-3 text-[#666]" strokeWidth={5} />
      </div>
    </div>
  );
}

function VScroll() {
  return (
    <div className="flex w-6 flex-col pl-[2px] pr-[3px] pt-[2px]">
      <button aria-label="Вверх" className="flex h-[19px] items-center justify-center border border-[#c6c6c6] bg-white"><Caret className="rotate-180" /></button>
      <div className="flex-1 bg-[#f1f1f1]"><div className="h-[53px] border border-[#ababab] bg-white" /></div>
      <button aria-label="Вниз" className="flex h-[19px] items-center justify-center border border-[#c6c6c6] bg-white"><Caret /></button>
    </div>
  );
}

const TABS = [
  ['ЗПООН', 'w-[81px] bg-[#00b050] text-black'], ['WB', 'w-[47px] bg-[#00b050] text-black'], ['66D', 'w-[52px] bg-[#ffc000] text-black'],
  ['T66D', 'w-[62px] bg-[#92d050] text-black'], ['65D', 'w-[52px] bg-[#ffc000] text-black'], ['68A', 'w-[52px] bg-[#ffc000] text-black'],
  ['68B', 'w-[49px] bg-[#ffc000] text-black'], ['68D', 'w-[52px] bg-[#ffc000] text-black'], ['T68D', 'w-[62px] bg-[#00b050] text-black'],
  ['УрЗП', 'w-[63px] bg-[#ffc000] text-black'], ['4-5Ш', 'w-[63px] bg-[#ff0000] text-white'], ['ЗПРФ', 'w-[66px] text-[#444]'],
  ['МИР', 'w-[58px] bg-[#00b050] text-black'], ['Wage', 'w-[65px] text-[#444]'], ['1929-16', 'w-[87px] bg-[#c00000] text-white'],
  ['Oil', 'w-[41px] bg-[#ff0000] text-white'], ['WEng', 'w-[66px] text-[#444]'], ['Stel', 'w-[50px] bg-[#ffff00] text-black'],
  ['WStl', 'w-[58px] bg-[#00b050] text-black'], ['OC', 'w-[43px] bg-[#993300] text-white'], ['SP', 'w-[37px] bg-[#ff6600] text-white'],
  ['MUSA', 'w-[71px] border-b-[3px] border-[#217346] bg-linear-to-b from-white to-[#ffff99] font-bold text-[#217346]'],
  ['MEC', 'w-[55px] bg-[#00ff00] text-black'], ['МКНР', 'w-[69px] bg-[#800000] text-white'], ['МРФ', 'w-[58px] bg-[#993300] text-white'],
];

function SheetTabs() {
  return (
    <div className="flex h-[29px] items-start border-t border-[#ababab] bg-[#f5f5f5] pt-[2px] text-[16px]">
      <div className="flex h-6 w-[106px] items-center pl-7 text-[#217346]">
        <svg viewBox="0 0 36 10" className="h-[10px] w-9"><path d="M5 0v10L0 5z" fill="#217346" /><path d="M30 0v10l5-5z" fill="#bbb" /></svg>
        <span className="ml-4 font-bold">...</span>
      </div>
      <div className="flex divide-x-0 gap-[5px]">
        {TABS.map(([name, cls]) => (
          <button key={name} className={'h-[23px] shrink-0 pb-1 leading-none ' + cls}>{name}</button>
        ))}
      </div>
      <button aria-label="Новый лист" className="ml-9 mt-[2px] flex h-5 w-5 items-center justify-center rounded-full border-2 border-[#808080]">
        <Plus className="h-3 w-3 text-[#808080]" strokeWidth={4} />
      </button>
      <svg viewBox="0 0 2 12" className="ml-auto mr-4 mt-[6px] h-3 w-[2px]"><path d="M0 0h2v2H0zM0 5h2v2H0zM0 10h2v2H0z" fill="#aaa" /></svg>
      <div className="mr-7 mt-[2px] flex h-[19px] w-[107px] bg-[#e8e8e8]">
        <button aria-label="Влево" className="flex w-[19px] items-center justify-center border border-[#ababab] bg-white"><Caret className="rotate-90" /></button>
        <div className="w-[37px] border border-[#ababab] bg-white" />
        <button aria-label="Вправо" className="ml-auto flex w-[19px] items-center justify-center border border-[#ababab] bg-white"><Caret className="-rotate-90" /></button>
      </div>
    </div>
  );
}

function StatusBar() {
  return (
    <div className="flex h-[27px] items-center bg-[#217346] pl-[7px] text-[12px] text-white">
      <span className="text-[13px]">ГОТОВО</span>
      <svg viewBox="0 0 15 15" className="ml-5 h-[15px] w-[15px]"><path d="M3 3.500h11.500v11H3z" fill="none" stroke="#fff" /><path d="M5 7h8M5 10h8M5 12.500h8" stroke="#fff" strokeDasharray="2 1" /><circle cx="4" cy="4" r="3.500" fill="#fff" /></svg>
      <div className="ml-auto flex h-full items-center">
        <button aria-label="Обычный" className="flex h-full w-[41px] items-center justify-center bg-[#0a6332]"><svg viewBox="0 0 14 12" className="h-3 w-[14px]"><path d="M.5.500h13v11H.500zM.500 4h13M.500 8h13M5 .500v11M9 .500v11" fill="none" stroke="#fff" /></svg></button>
        <button aria-label="Разметка" className="flex h-full w-[41px] items-center justify-center"><svg viewBox="0 0 14 12" className="h-3 w-[14px]"><path d="M.5.500h13v11H.500zM3.500 2.500h7v7h-7zM4 4.500h6M4 6.500h6" fill="none" stroke="#fff" /></svg></button>
        <button aria-label="Страничный" className="flex h-full w-[41px] items-center justify-center"><svg viewBox="0 0 14 12" className="h-3 w-[14px]"><path d="M.5.500h13v11H.500z" fill="none" stroke="#fff" /><path d="M1 1h4v7H1zM6 1h3v7H6z" fill="#fff" /></svg></button>
        <Minus className="ml-2 h-3 w-3" strokeWidth={5} />
        <label className="relative mx-[2px] flex items-center">
          <i className="absolute left-[62px] h-[7px] w-px bg-white" />
          <input aria-label="Масштаб" type="range" min="10" max="210" defaultValue="84" className="h-px w-[125px] appearance-none bg-white [&::-webkit-slider-thumb]:h-[14px] [&::-webkit-slider-thumb]:w-[5px] [&::-webkit-slider-thumb]:appearance-none [&::-webkit-slider-thumb]:bg-white" />
        </label>
        <Plus className="h-4 w-4" strokeWidth={4} />
        <span className="ml-3 w-[41px]">75%</span>
      </div>
    </div>
  );
}

const pad = <><path d="M4 3h20v26H4z" fill="#f4f4ec" stroke="#888" /><path d="M6 16h16v11H6z" fill="#7cc242" /><text x="6" y="14" fontSize="9" fontFamily="Liberation Sans">n++</text><path d="M28 4L18 18" stroke="#d9a520" strokeWidth="3" /></>;
const redCam = <><rect x="1" y="1" width="30" height="30" rx="4" fill="#111" /><circle cx="13" cy="16" r="7" fill="#e11" stroke="#fff" strokeWidth="2" /><path d="M18 12h9v8h-9z" fill="#e11" stroke="#fff" strokeWidth="2" /><path d="M9 16h7M13 13l4 3-4 3" stroke="#fff" strokeWidth="2" fill="none" /></>;

const APPS = [
  ['Проводник', <><path d="M3 3h10l2 3h14v22H3z" fill="#f3d88a" stroke="#d0a94c" /><path d="M5 11h22v8H5z" fill="#fdf1c0" /><path d="M8 18h16v12h-4v-7h-8v7H8z" fill="#7cc4ee" /></>, true],
  ['Chrome', <><circle cx="16" cy="16" r="14" fill="#fff" /><path d="M16 16L4 9a14 14 0 0 1 24 0z" fill="#ea4335" /><path d="M16 16L4 9a14 14 0 0 0 10 21z" fill="#34a853" /><path d="M16 16h0L14 30A14 14 0 0 0 28 9H16z" fill="#fbbc05" /><circle cx="16" cy="16" r="6" fill="#4285f4" stroke="#fff" strokeWidth="2" /></>, true],
  ['Ножницы', <><ellipse cx="13" cy="9" rx="9" ry="8" fill="#fff" stroke="#e33" strokeWidth="2" /><path d="M10 3l12 20M20 4L16 22" stroke="#9aa7b5" strokeWidth="2.500" /><circle cx="25" cy="25" r="4" fill="none" stroke="#2d78c4" strokeWidth="3" /><circle cx="15" cy="27" r="3.500" fill="none" stroke="#2d78c4" strokeWidth="3" /></>, true],
  ['cmd', <><path d="M1 5h30v23H1z" fill="#111" stroke="#bbb" /><text x="4" y="15" fontSize="8" fill="#fff" fontFamily="Liberation Mono">C:\_</text></>],
  ['Монитор', <><path d="M4 3l20-2 2 21-20 1z" fill="#dbe6f3" stroke="#3e5f8c" strokeWidth="2" /><path d="M7 6l14-1 1 12-14 1z" fill="#2354b0" /><path d="M11 15l8-8" stroke="#fff" strokeWidth="2" /><path d="M12 25h16l2 5H14z" fill="#e5e5e5" stroke="#888" /></>],
  ['Удалённый стол', <><path d="M5 2h22v9H5z" fill="#2458c8" /><path d="M2 11h24v11H2z" fill="#dfe9f7" stroke="#3e5f8c" /><path d="M6 13h17v6H6z" fill="#3a77e0" /><path d="M12 24h17v5H14z" fill="#eee" stroke="#777" /></>, true],
  ['Сеанс', <><path d="M3 4h16v16H3z" fill="#ddd" stroke="#666" /><path d="M10 6h18v18H10z" fill="#333" stroke="#888" /><path d="M13 9h12v11H13z" fill="#1d8c2a" /><path d="M12 26h14v3H12z" fill="#bbb" /></>],
  ['Калькулятор', <><path d="M6 2h20v28H6z" fill="#d6e6f5" stroke="#7fa5c9" /><path d="M8 4h16v7H8z" fill="#f6f2b8" stroke="#9ab" /><path d="M10 14h3v3h-3zM15 14h3v3h-3zM20 14h3v3h-3zM10 19h3v3h-3zM15 19h3v3h-3zM10 24h3v3h-3zM15 24h3v3h-3z" fill="#7fa5c9" /><path d="M20 19h3v8h-3z" fill="#e79b3c" /></>],
  ['VS Code', <><path d="M23 2l7 3v22l-7 3L10 18l-6 5-3-2 6-5-6-5 3-2 6 5z" fill="#1177bb" /><path d="M23 9l-9 7 9 7z" fill="#b1ceea" /></>],
  ['CCleaner', <><path d="M26 8a12 12 0 1 0-2 18l-4-4a6 6 0 1 1 1-10z" fill="#d3301f" /><path d="M15 18L27 1l3 3-11 15zM9 22l8-4 3 4-6 9z" fill="#e8a23a" /></>],
  ['Ниндзя', <><circle cx="16" cy="8" r="7" fill="#1a1a1a" /><path d="M11 7h10v3H11z" fill="#e8c39a" /><path d="M9 14h14l2 8-4 1v8h-4v-6h-2v6h-4v-8l-4-2z" fill="#1a1a1a" /></>],
  ['AIDA64', <><path d="M0 1h32v30H0z" fill="#b90d0d" /><text x="3" y="24" fontSize="23" fill="#fff" fontFamily="Liberation Sans">64</text></>],
  ['Notepad++', pad],
  ['Камера', redCam],
  ['C', <><circle cx="16" cy="16" r="15" fill="#111" /><path d="M22 11a8 8 0 1 0 0 10" fill="none" stroke="#1c9fe8" strokeWidth="4" /></>],
  ['Notepad++ 2', pad, true],
  ['Камера 2', redCam, true],
  ['Word', <><path d="M17 5h13v22H17z" fill="#fff" stroke="#2b579a" /><path d="M19 9h9M19 13h9M19 17h9M19 21h9" stroke="#2b579a" strokeWidth="2" /><path d="M1 4l18-3v30L1 28z" fill="#2b579a" /><path d="M4 11l3 10 3-9 3 9 3-10" stroke="#fff" strokeWidth="2" fill="none" /></>, true],
];

const TRAY = [
  ['Камера', <><circle cx="7" cy="11" r="6" fill="#e33" stroke="#fff" /><path d="M8 5h11v10H8z" fill="#e33" stroke="#fff" /><path d="M4 11h9M10 8l4 3-4 3" fill="none" stroke="#fff" strokeWidth="1.500" /></>],
  ['Avast', <><circle cx="10" cy="10" r="10" fill="#ff7800" /><path d="M5 15L10 4l5 11-4-3-4 4z" fill="#fff" /></>],
  ['Поддержка', <><path d="M3 1v18M3 2c5-2 6 3 13 0v9c-6 3-7-2-13 0z" fill="#fff" stroke="#333" /><circle cx="14" cy="14" r="5" fill="#e02020" /><path d="M12 12l4 4M16 12l-4 4" stroke="#fff" strokeWidth="1.500" /></>],
  ['Питание', <><path d="M2 3h9v16H2z" fill="#fff" stroke="#333" /><path d="M13 5h6v5h-6zM14 2v3M18 2v3M16 10v5" stroke="#fff" fill="#fff" strokeWidth="1.500" /></>],
  ['Сеть', <><path d="M6 5h13v9H6z" fill="#7a8ca3" stroke="#fff" strokeWidth="2" /><path d="M9 17h8" stroke="#fff" strokeWidth="2" /><path d="M2 2h4v7H2z" fill="#fff" stroke="#333" /></>],
  ['Звук', <><path d="M3 7h3l5-5v16l-5-5H3z" fill="#fff" stroke="#555" /><path d="M14 6c2 2 2 6 0 8" fill="none" stroke="#fff" strokeWidth="1.500" /></>],
];

function Taskbar() {
  return (
    <footer className="relative flex h-[34px] items-center border-t border-[#7d98b3] bg-[#b1ceea] bg-[linear-gradient(90deg,transparent_82%,#8a9fb8_86%)] pl-[70px]">
      <button aria-label="Пуск" className="absolute bottom-0 left-3 h-[41px] w-[42px]">
        <svg viewBox="0 0 42 42" className="h-full w-full">
          <circle cx="21" cy="21" r="20" fill="#1c5088" />
          <ellipse cx="21" cy="31" rx="15" ry="9" fill="#2fa3d8" />
          <ellipse cx="21" cy="11" rx="14" ry="9" fill="#7fa9cc" />
          <path d="M10 12c4-3 7-3 11-1l-2 9c-4-2-7-2-11 1z" fill="#e8562a" />
          <path d="M22 12c4 2 7 2 12-1l-3 9c-4 2-7 2-11 0z" fill="#8cc63e" />
          <path d="M8 22c4-3 7-3 11-1l-2 9c-4-2-6-2-11 1z" fill="#3aa0e0" />
          <path d="M20 22c4 2 7 2 12-1l-3 9c-4 2-7 2-11 0z" fill="#fbc72d" />
        </svg>
      </button>
      {APPS.map(([name, art, open]) => (
        <button key={name} aria-label={name} className={'mx-px flex h-[32px] w-12 shrink-0 items-center justify-center ' + (open ? 'rounded-sm border border-[#5f7d9c] bg-[#d3e3f3]' : '')}>
          <svg viewBox="0 0 32 32" className="h-[22px] w-[22px]">{art}</svg>
        </button>
      ))}
      <button aria-label="Excel" className="mx-px flex h-[32px] w-[44px] items-center justify-center rounded-sm border border-[#5f7d9c] bg-white/80"><ExcelLogo className="h-5 w-5" /></button>
      <div className="ml-auto flex h-full items-center text-white">
        <span className="mr-5 pb-1 text-[14px]">RU</span>
        <div className="flex gap-[10px] drop-shadow">
          {TRAY.map(([name, art]) => <svg key={name} viewBox="0 0 20 20" className="h-5 w-5">{art}</svg>)}
        </div>
        <time className="ml-5 mr-3 text-[14px]">19:22</time>
        <button aria-label="Показать рабочий стол" className="h-full w-[14px] border-l border-[#4f6277] bg-[#7e93ad]" />
      </div>
    </footer>
  );
}

export default function App() {
  return (
    <div className="flex h-screen flex-col overflow-hidden bg-white font-['Open_Sans',sans-serif]">
      <TitleBar />
      <Ribbon />
      <FormulaBar />
      <main id="sheet" className="flex min-h-0 flex-1">
        <div className="relative flex-1 overflow-hidden font-['Liberation_Serif',serif]">
          <Grid />
          <div className="absolute left-[26px] top-[52px] h-[32px] w-[37px] border-2 border-[#217346]">
            <i className="absolute -bottom-[3px] -right-[3px] h-[5px] w-[5px] border-l border-t border-white bg-[#217346]" />
          </div>
          <ChartM1 />
          <ChartM2 />
          <ChartLevels />
          <ChartRatio />
          <ChartM1Quarterly />
          <ChartM2Quarterly />
        </div>
        <VScroll />
      </main>
      <SheetTabs />
      <StatusBar />
      <Taskbar />
    </div>
  );
}
